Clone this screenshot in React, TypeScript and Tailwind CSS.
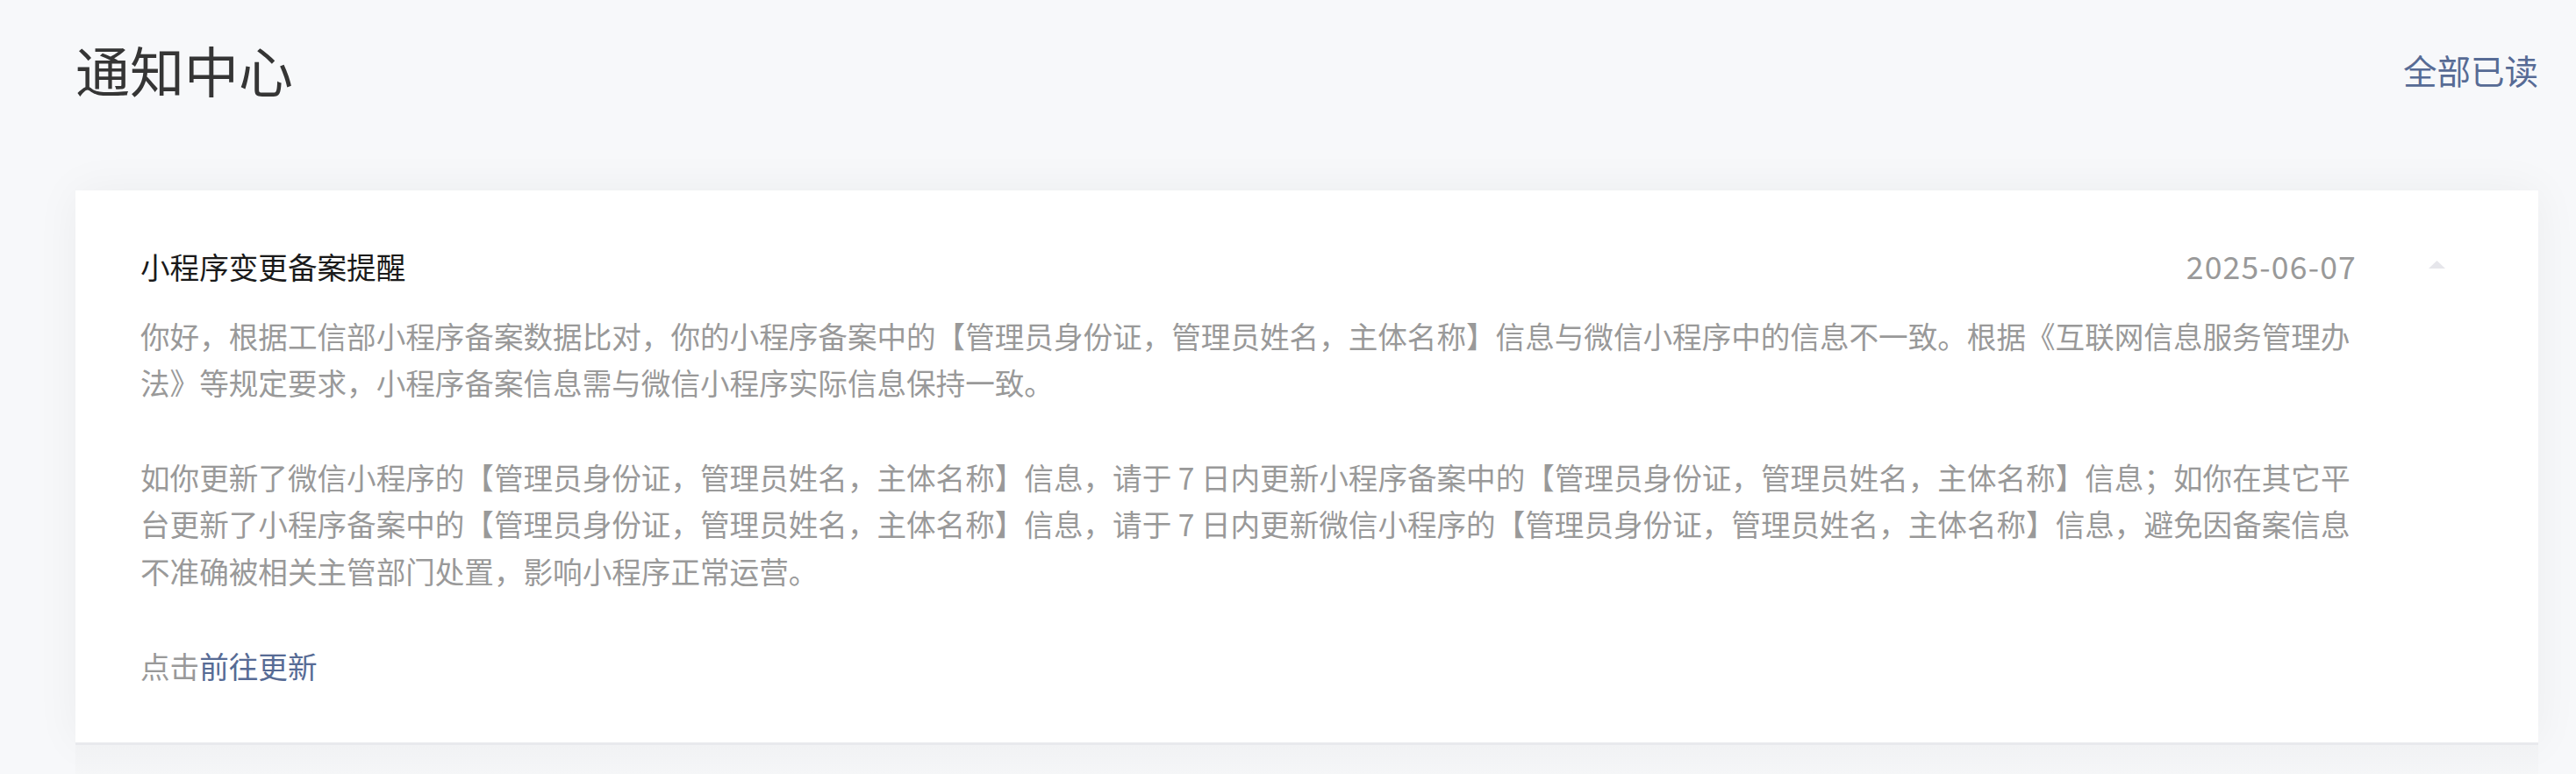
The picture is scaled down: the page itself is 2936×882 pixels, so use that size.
import React from "react";

const FONT = '"Noto Sans CJK SC", "Noto Sans", sans-serif';

function UpCaret() {
  return (
    <svg width="19" height="9" viewBox="0 0 19 9" className="block">
      <polygon points="9.5,0 19,9 0,9" fill="#e6e6eb" />
    </svg>
  );
}

export default function App() {
  return (
    <div
      className="min-h-screen w-full bg-[#f7f8fa] pl-[86px] pr-[43px] overflow-hidden"
      style={{ fontFamily: FONT }}
    >
      <div className="flex h-[158px] items-center justify-between">
        <h1 className="text-[62px] leading-none font-normal text-[#353535]">通知中心</h1>
        <a className="text-[38.5px] leading-none text-[#576b95] cursor-pointer">全部已读</a>
      </div>

      <div className="mt-[59px] bg-white shadow-[0_0_48px_0_rgba(0,0,0,0.05)] flex items-start pl-[74px] pr-[106px] pt-[60px] pb-[61px]">
        <div className="flex-1 min-w-0">
          <div className="flex items-center justify-between h-[53.6px]">
            <div className="text-[33.6px] leading-[1.6] text-[#1a1a1a]">小程序变更备案提醒</div>
            <div className="text-[35.5px] leading-[1.6] text-[#999999] tracking-[1.2px]">2025-06-07</div>
          </div>
          <div className="mt-[25px] text-[33.6px] leading-[1.6] text-[#999999]">
            <p>
              你好，根据工信部小程序备案数据比对，你的小程序备案中的【管理员身份证，管理员姓名，主体名称】信息与微信小程序中的信息不一致。根据《互联网信息服务管理办法》等规定要求，小程序备案信息需与微信小程序实际信息保持一致。
            </p>
            <p className="mt-[53.6px]">
              如你更新了微信小程序的【管理员身份证，管理员姓名，主体名称】信息，请于 7 日内更新小程序备案中的【管理员身份证，管理员姓名，主体名称】信息；如你在其它平台更新了小程序备案中的【管理员身份证，管理员姓名，主体名称】信息，请于 7 日内更新微信小程序的【管理员身份证，管理员姓名，主体名称】信息，避免因备案信息不准确被相关主管部门处置，影响小程序正常运营。
            </p>
            <p className="mt-[53.6px]">
              点击<a className="text-[#576b95] cursor-pointer">前往更新</a>
            </p>
          </div>
        </div>
        <div className="w-[19px] ml-[82px] mt-[20px] shrink-0">
          <UpCaret />
        </div>
      </div>

      <div className="h-[60px] border-t-[3px] border-[#e8e9ed] bg-gradient-to-b from-[#f1f2f4] to-[#f8f9fa]" />
    </div>
  );
}
